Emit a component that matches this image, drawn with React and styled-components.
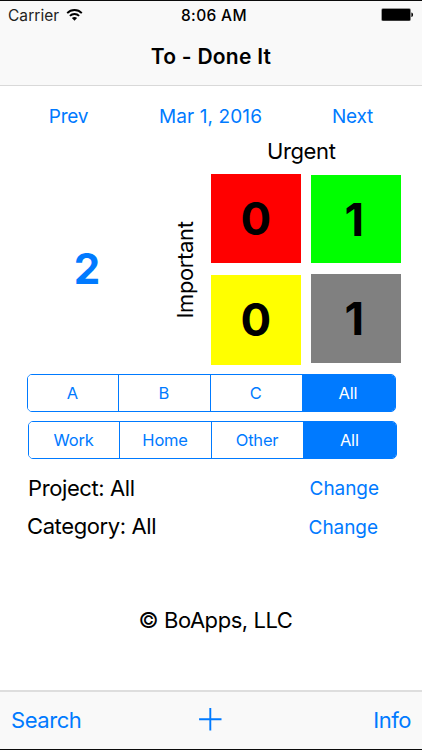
import { useState } from "react"
import styled, { createGlobalStyle } from "styled-components"

const priorities = ["A", "B", "C", "All"]
const places = ["Work", "Home", "Other", "All"]

const App = () => {
    const [priority, setPriority] = useState(3)
    const [place, setPlace] = useState(3)

    return (
      <Screen>
          <GlobalStyle />

          <Header>
              <StatusBar>
                  <Carrier>
                      Carrier
                      <WifiIcon />
                  </Carrier>
                  <Clock>8:06 AM</Clock>
                  <BatterySide>
                      <BatteryIcon />
                  </BatterySide>
              </StatusBar>
              <Title>To - Done It</Title>
          </Header>

          <Main>
              <DateRow>
                  <LinkButton $spacing="-0.2px">Prev</LinkButton>
                  <LinkButton $spacing="0.1px">Mar 1, 2016</LinkButton>
                  <LinkButton $spacing="-0.2px">Next</LinkButton>
              </DateRow>

              <Matrix>
                  <Total>2</Total>
                  <SideLabel>
                      <Rotated>Important</Rotated>
                  </SideLabel>
                  <Quadrants>
                      <TopLabel>Urgent</TopLabel>
                      <Column $top="7.5px" $gap="12px">
                          <Tile $color="#ff0000">0</Tile>
                          <Tile $color="#ffff00">0</Tile>
                      </Column>
                      <Column $top="9px" $gap="10.5px">
                          <Tile $color="#00ff00" $height="88px" $nudge="3px">1</Tile>
                          <Tile $color="#808080" $nudge="3px">1</Tile>
                      </Column>
                  </Quadrants>
              </Matrix>

              <Filters>
                  <Segments>
                      {priorities.map((name, i) => (
                        <Segment key={name} $active={i === priority} onClick={() => setPriority(i)}>
                            {name}
                        </Segment>
                      ))}
                  </Segments>
                  <Segments $shift>
                      {places.map((name, i) => (
                        <Segment key={name} $active={i === place} onClick={() => setPlace(i)}>
                            {name}
                        </Segment>
                      ))}
                  </Segments>
              </Filters>

              <Settings>
                  <SettingRow $height="39px" $left="28px" $right="43px" $drop="2px">
                      <Label>Project: All</Label>
                      <LinkButton>Change</LinkButton>
                  </SettingRow>
                  <SettingRow $height="37px" $left="27px" $right="44px" $drop="4px">
                      <Label>Category: All</Label>
                      <LinkButton>Change</LinkButton>
                  </SettingRow>
              </Settings>

              <Copyright>© BoApps, LLC</Copyright>
          </Main>

          <Toolbar>
              <ToolButton>Search</ToolButton>
              <PlusIcon />
              <ToolButton $right>Info</ToolButton>
          </Toolbar>
      </Screen>
    )
}

const WifiIcon = () => (
    <svg width="17" height="13" viewBox="0 0 17 13" fill="none">
        <path d="M1.2 4.1C5.2 0 11.8 0 15.8 4.1" stroke="#000" strokeWidth="1.9" />
        <path d="M3.9 6.8C6.4 4.3 10.6 4.3 13.1 6.8" stroke="#000" strokeWidth="1.9" />
        <path d="M8.5 11.8L5.9 9.1C7.4 7.7 9.6 7.7 11.1 9.1Z" fill="#000" />
    </svg>
)

const BatteryIcon = () => (
    <svg width="33" height="14" viewBox="0 0 33 14">
        <rect x="0.3" y="0.3" width="29.5" height="12.8" rx="1.6" fill="#777" />
        <rect x="1" y="0.9" width="28.1" height="11.6" rx="1" fill="#000" />
        <path d="M30.4 4.4C32.6 4.8 32.6 8.6 30.4 9Z" fill="#000" />
    </svg>
)

const PlusIcon = () => (
    <svg width="24" height="24" viewBox="0 0 24 24">
        <path d="M11.3 0V22.4M0.1 11.2H22.5" stroke="#007aff" strokeWidth="1.9" />
    </svg>
)

export default App

const GlobalStyle = createGlobalStyle`
    body {
        margin: 0;
        background: #fff;
        font-family: Inter, "Liberation Sans", sans-serif;
    }

    * {
        box-sizing: border-box;
    }

    button {
        font-family: inherit;
        background: none;
        border: none;
        padding: 0;
        margin: 0;
        cursor: pointer;
    }

    svg {
        display: block;
    }
`

const Screen = styled.div`
    width: 422px;
    height: 750px;
    display: flex;
    flex-direction: column;
    overflow: hidden;
    color: #000;
    white-space: nowrap;
    border-top: 1px solid #0b0b0b;
    border-bottom: 1px solid #0b0b0b;
`

const Header = styled.div`
    height: 85px;
    background: #f9f9f9;
    border-bottom: 1px solid #d9d9d9;
`

const StatusBar = styled.div`
    height: 28px;
    padding: 0 8px;
    display: grid;
    grid-template-columns: 1fr auto 1fr;
    align-items: center;
`

const Carrier = styled.div`
    display: flex;
    align-items: center;
    gap: 7px;
    font-size: 15.5px;
    letter-spacing: 0.05px;
    color: #222;
`

const Clock = styled.div`
    font-size: 15.5px;
    font-weight: 500;
    letter-spacing: 0.35px;
    padding-left: 6px;
`

const BatterySide = styled.div`
    display: flex;
    justify-content: flex-end;
`

const Title = styled.div`
    height: 56px;
    line-height: 56px;
    text-align: center;
    font-size: 21px;
    font-weight: 600;
    letter-spacing: 0.25px;
`

const Main = styled.div`
    flex: 1;
    background: #fff;
`

const DateRow = styled.div`
    display: grid;
    grid-template-columns: 137px 147px 137px;
    justify-items: center;
    align-items: center;
    height: 50px;
    padding-top: 11px;
`

const LinkButton = styled.button`
    color: #007aff;
    font-size: 19px;
    line-height: 24px;
    letter-spacing: ${({ $spacing }) => $spacing || "-0.05px"};
`

const Matrix = styled.div`
    display: flex;
    height: 229px;
`

const Total = styled.div`
    width: 174px;
    padding-top: 111px;
    line-height: 43px;
    text-align: center;
    font-size: 42px;
    font-weight: 650;
    color: #007aff;
`

const SideLabel = styled.div`
    width: 22px;
    display: flex;
    justify-content: center;
    padding-top: 123px;
`

const Rotated = styled.div`
    width: 100px;
    height: 22px;
    flex-shrink: 0;
    line-height: 22px;
    text-align: center;
    font-size: 22px;
    letter-spacing: -0.35px;
    transform: rotate(-90deg);
`

const Quadrants = styled.div`
    margin-left: 15px;
    display: grid;
    grid-template-columns: 89.5px 89.5px;
    grid-template-rows: 30px auto;
    column-gap: 10.5px;
    align-content: start;
`

const TopLabel = styled.div`
    grid-column: 1 / -1;
    padding-right: 9px;
    text-align: center;
    font-size: 22px;
    letter-spacing: -0.35px;
    line-height: 30px;
`

const Column = styled.div`
    display: flex;
    flex-direction: column;
    padding-top: ${({ $top }) => $top};
    gap: ${({ $gap }) => $gap};
`

const Tile = styled.div`
    height: ${({ $height }) => $height || "89.5px"};
    padding-right: ${({ $nudge }) => $nudge || "0"};
    background: ${({ $color }) => $color};
    display: flex;
    align-items: center;
    justify-content: center;
    font-size: 45.5px;
    font-weight: 650;
`

const Filters = styled.div`
    display: flex;
    flex-direction: column;
    gap: 9px;
    padding: 9px 0 0 27px;
`

const Segments = styled.div`
    display: grid;
    grid-template-columns: 90px 92px 92px 1fr;
    width: 368.5px;
    height: 38px;
    margin-left: ${({ $shift }) => ($shift ? "1.3px" : "0")};
    border: 1.3px solid #007aff;
    border-radius: 5px;
    overflow: hidden;
`

const Segment = styled.button`
    padding-right: 1.5px;
    font-size: 16.5px;
    letter-spacing: -0.2px;
    color: ${({ $active }) => ($active ? "#fff" : "#007aff")};
    background: ${({ $active }) => ($active ? "#007aff" : "#fff")};

    & + & {
        border-left: 1px solid #007aff;
    }
`

const Settings = styled.div`
    padding-top: 9px;
`

const SettingRow = styled.div`
    display: flex;
    justify-content: space-between;
    align-items: center;
    height: ${({ $height }) => $height};
    padding: 0 ${({ $right }) => $right} 0 ${({ $left }) => $left};

    ${LinkButton} {
        padding-top: ${({ $drop }) => $drop};
    }
`

const Label = styled.div`
    font-size: 22px;
    letter-spacing: -0.4px;
`

const Copyright = styled.div`
    padding: 62px 0 0 9px;
    text-align: center;
    font-size: 22px;
    letter-spacing: -0.45px;
    line-height: 28px;
`

const Toolbar = styled.div`
    height: 59px;
    padding: 0 11px 1px;
    display: grid;
    grid-template-columns: 1fr auto 1fr;
    align-items: center;
    background: #f9f9f9;
    border-top: 2px solid #dedede;
`

const ToolButton = styled.button`
    color: #007aff;
    font-size: 22px;
    letter-spacing: -0.45px;
    text-align: ${({ $right }) => ($right ? "right" : "left")};
`
